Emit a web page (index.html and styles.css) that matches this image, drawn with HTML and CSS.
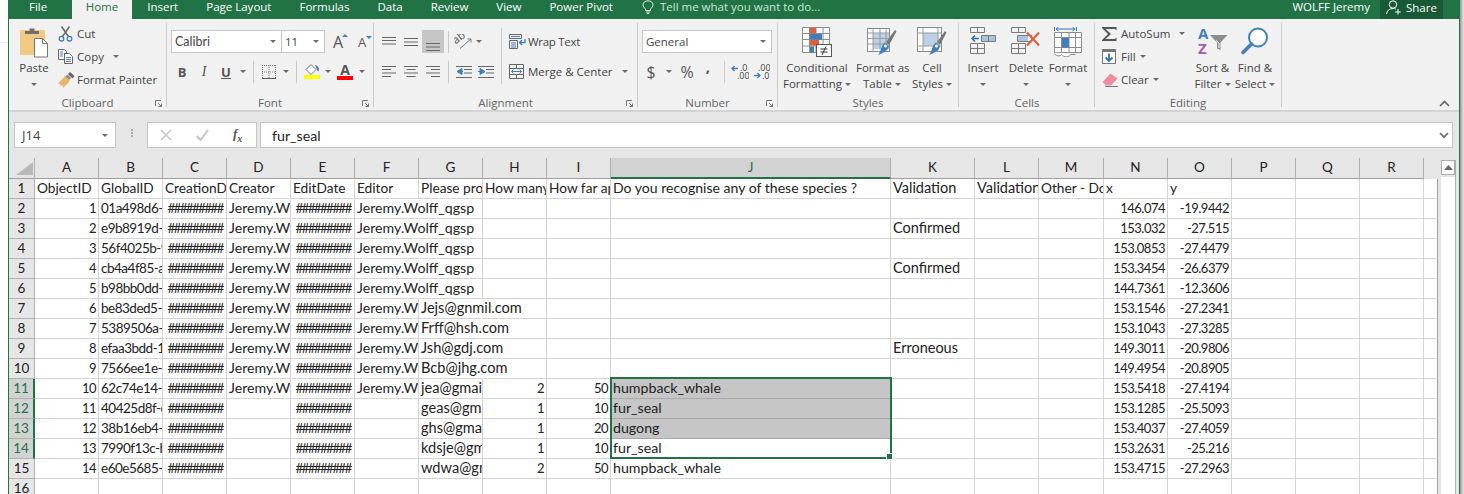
FILE: index.html
```html
<!doctype html>
<html>
<head>
  <meta charset="utf-8">
  <title>Excel</title>
  <link rel="stylesheet" href="styles.css">
</head>
<body>
<div class="page">
  <div class="gutter"></div>
  <div class="window">

    <!-- tabs -->
    <nav class="tabs">
      <span class="tab tab-file">File</span>
      <span class="tab tab-home">Home</span>
      <span class="tab">Insert</span>
      <span class="tab">Page Layout</span>
      <span class="tab">Formulas</span>
      <span class="tab">Data</span>
      <span class="tab">Review</span>
      <span class="tab">View</span>
      <span class="tab">Power Pivot</span>
      <span class="tell">
        <svg width="12" height="14" viewBox="0 0 12 14"><path d="M3.5 9C2 7.500 1 6.500 1 4.800 1 2.500 3.300 .8 6 .8s5 1.700 5 4c0 1.700-1 2.700-2.500 4.200v1.500h-5zM4 12h4M4.800 13.500h2.400" fill="none" stroke="#e4efe8" stroke-width="1"/></svg>
        Tell me what you want to do...
      </span>
      <span class="user">WOLFF Jeremy</span>
      <span class="share">
        <svg width="16" height="15" viewBox="0 0 16 15"><circle cx="7" cy="4.500" r="3.700" fill="none" stroke="#fff"/><path d="M.5 14c.5-3.500 3-5.500 6.500-5.500 1 0 2 .2 2.800.6M12 9v5.500M9.200 12h5.600" fill="none" stroke="#fff"/></svg>
        Share
      </span>
    </nav>

    <!-- ribbon -->
    <div class="ribbon">

      <section class="group g-clipboard">
        <div class="group-body">
          <div class="big w-paste">
            <div class="big-icon">
              <svg width="28" height="31" viewBox="0 0 28 31"><rect x="0" y="3" width="25" height="25" rx="1" fill="#f0c982"/><path d="M5 7V4h4.500V1.500h5V4H19v3z" fill="#6f6f6f"/><path d="M14.500 11.500h8l5 5v13.500h-13z" fill="#fff" stroke="#777"/><path d="M22.500 11.500v5h5" fill="none" stroke="#777"/></svg>
            </div>
            <div class="big-line">Paste</div>
            <div class="big-line"><i class="arrow"></i></div>
          </div>
          <div class="stack">
            <div class="row">
              <span class="sicon"><svg width="16" height="16" viewBox="0 0 16 16"><path d="M4.500 10.500 11.500 .5M10.500 10.500 3.500 .5" stroke="#6d6d6d" stroke-width="1.600" fill="none"/><circle cx="3.500" cy="12.700" r="2.300" fill="none" stroke="#3f7fbd" stroke-width="1.300"/><circle cx="11.500" cy="12.700" r="2.300" fill="none" stroke="#3f7fbd" stroke-width="1.300"/></svg></span>
              Cut
            </div>
            <div class="row">
              <span class="sicon"><svg width="15" height="15" viewBox="0 0 15 15"><path d="M.5.5h6l2 2v2h-2v6h-6z" fill="#fff" stroke="#666"/><path d="M6.500 4.500h5l3 3v7h-8z" fill="#fff" stroke="#666"/><path d="M8 8.500h5M8 10.500h5M8 12.500h5M2 3h3M2 5h3M2 7h3" stroke="#4f7fad"/></svg></span>
              Copy <i class="arrow copy-arrow"></i>
            </div>
            <div class="row">
              <span class="sicon"><svg width="17" height="16" viewBox="0 0 17 16"><path d="M7 4 12 9 7.500 13.500 5 16 4.500 13 2.500 14.500 2.500 12 0 11.500z" fill="#e9b56e"/><path d="M7.500 4.500 9.500 2.500 13 6 11 8z" fill="#8a8a8a"/><path d="M10 2 12 0l4.500 4-2 2.500z" fill="#666"/></svg></span>
              Format Painter
            </div>
          </div>
        </div>
        <div class="group-label">Clipboard</div>
        <svg class="launcher" width="7" height="7" viewBox="0 0 7 7"><path d="M.5 6V.5H6M3 3l3.500 3.500M6.500 3.500v3h-3" fill="none" stroke="#777"/></svg>
      </section>

      <section class="group g-font">
        <div class="group-body rows">
          <div class="trow">
            <div class="combo c-name">Calibri<i class="arrow"></i></div>
            <div class="combo c-size">11<i class="arrow"></i></div>
            <span class="fontstep grow">A<i class="caret"></i></span>
            <span class="fontstep shrink">A<i class="caret caret-down"></i></span>
          </div>
          <div class="trow">
            <span class="tb w22 fb">B</span>
            <span class="tb w22 fi">I</span>
            <span class="tb w22 fu">U</span>
            <span class="tb w12"><i class="arrow"></i></span>
            <span class="sep"></span>
            <span class="tb w22"><svg width="14" height="14" viewBox="0 0 14 14"><path d="M.5 0v13M7 0v13M13.500 0v13M0 .5h14M0 7h14" stroke="#777" stroke-dasharray="1 1" fill="none"/><path d="M0 13.500h14" stroke="#555"/></svg></span>
            <span class="tb w12"><i class="arrow"></i></span>
            <span class="sep"></span>
            <span class="tb w22"><svg width="16" height="17" viewBox="0 0 16 17"><path d="M2 6.500 7 1.500l5 5L7 11.500z" fill="#fff" stroke="#777"/><path d="M11 2c2 .5 4 2 4 4.500 0 1-.5 1.500-1 1.500s-1-.5-1-1.500z" fill="#3f7fbd"/><rect y="12" width="16" height="4" fill="#ffff00"/></svg></span>
            <span class="tb w10"><i class="arrow"></i></span>
            <span class="tb w24 fcolor">A</span>
            <span class="tb w10"><i class="arrow"></i></span>
          </div>
        </div>
        <div class="group-label">Font</div>
        <svg class="launcher" width="7" height="7" viewBox="0 0 7 7"><path d="M.5 6V.5H6M3 3l3.500 3.500M6.500 3.500v3h-3" fill="none" stroke="#777"/></svg>
      </section>

      <section class="group g-align">
        <div class="group-body">
          <div class="rows align-left">
            <div class="trow">
              <span class="tb w22"><svg width="14" height="10" viewBox="0 0 14 10"><path d="M0 .5h14M0 3.500h14M0 7h14" stroke="#666"/></svg></span>
              <span class="tb w22"><svg width="14" height="10" viewBox="0 0 14 10"><path d="M0 1.500h14M0 5h14M0 8.500h14" stroke="#666"/></svg></span>
              <span class="tb w22 tb-on"><svg width="14" height="10" viewBox="0 0 14 10" class="push"><path d="M0 2.500h14M0 6h14M0 9.500h14" stroke="#666"/></svg></span>
              <span class="sep"></span>
              <span class="tb w20"><svg width="18" height="15" viewBox="0 0 18 15"><text x="1" y="8" class="ab" transform="rotate(-38 5 8)">ab</text><path d="M6 14.500 17 5M17 5h-3.500M17 5v3.500" stroke="#777" fill="none"/></svg></span>
              <span class="tb w12"><i class="arrow"></i></span>
            </div>
            <div class="trow">
              <span class="tb w22"><svg width="14" height="11" viewBox="0 0 14 11"><path d="M0 .5h14M0 3.500h9M0 7h14M0 10.500h9" stroke="#666"/></svg></span>
              <span class="tb w22"><svg width="14" height="11" viewBox="0 0 14 11"><path d="M0 .5h14M2.500 3.500h9M0 7h14M2.500 10.500h9" stroke="#666"/></svg></span>
              <span class="tb w22"><svg width="14" height="11" viewBox="0 0 14 11"><path d="M0 .5h14M5 3.500h9M0 7h14M5 10.500h9" stroke="#666"/></svg></span>
              <span class="sep"></span>
              <span class="tb w22"><svg width="16" height="12" viewBox="0 0 16 12"><path d="M0 .5h16M8 3.500h8M8 7h8M0 11.500h16" stroke="#666"/><path d="M6 2.500 1 5.500l5 3zM5 5.500h2" fill="#3f7fbd" stroke="#3f7fbd"/></svg></span>
              <span class="tb w22"><svg width="16" height="12" viewBox="0 0 16 12"><path d="M0 .5h16M8 3.500h8M8 7h8M0 11.500h16" stroke="#666"/><path d="M2 2.500l5 3-5 3zM3 5.500H0" fill="#3f7fbd" stroke="#3f7fbd"/></svg></span>
            </div>
          </div>
          <span class="tall-sep"></span>
          <div class="rows align-right">
            <div class="trow">
              <span class="sicon"><svg width="17" height="15" viewBox="0 0 17 15"><path d="M.5.5h12v4H.5zM.5 6.500h8v8H.5z" fill="none" stroke="#666"/><path d="M2 2.500h9M2 9h5M2 11h5M2 13h5" stroke="#4f7fad"/><path d="M16 5v3.500h-5M13 6l-2.500 2.500L13 11" fill="none" stroke="#3f7fbd" stroke-width="1.300"/></svg></span>
              <span class="wrap-text">Wrap Text</span>
            </div>
            <div class="trow">
              <span class="sicon"><svg width="15" height="15" viewBox="0 0 15 15"><path d="M.5.5h14v14H.5zM.5 4.500h14M.5 10.500h14M7.500.5v4M7.500 10.500v4" fill="none" stroke="#666"/><path d="M2.500 7.500h10M4.500 5.500l-2 2 2 2M10.500 5.500l2 2-2 2" fill="none" stroke="#3f7fbd"/></svg></span>
              Merge &amp; Center <i class="arrow merge-arrow"></i>
            </div>
          </div>
        </div>
        <div class="group-label">Alignment</div>
        <svg class="launcher" width="7" height="7" viewBox="0 0 7 7"><path d="M.5 6V.5H6M3 3l3.500 3.500M6.500 3.500v3h-3" fill="none" stroke="#777"/></svg>
      </section>

      <section class="group g-number">
        <div class="group-body rows">
          <div class="trow">
            <div class="combo c-format">General<i class="arrow"></i></div>
          </div>
          <div class="trow">
            <span class="tb w18 fcur">$</span>
            <span class="tb w18"><i class="arrow"></i></span>
            <span class="tb w18 fcur">%</span>
            <span class="tb w24 fcomma">,</span>
            <span class="sep"></span>
            <span class="tb w22"><svg width="18" height="16" viewBox="0 0 18 16"><path d="M7 4.500H1M3.500 2 1 4.500 3.500 7" fill="none" stroke="#3f7fbd" stroke-width="1.300"/><text x="9" y="7" class="dec">.0</text><text x="6" y="15" class="dec">.00</text></svg></span>
            <span class="tb w20"><svg width="17" height="16" viewBox="0 0 17 16"><text x="5" y="7" class="dec">.00</text><text x="9" y="15" class="dec">.0</text><path d="M1 11.500h6M4.500 9 7 11.500 4.500 14" fill="none" stroke="#3f7fbd" stroke-width="1.300"/></svg></span>
          </div>
        </div>
        <div class="group-label">Number</div>
        <svg class="launcher" width="7" height="7" viewBox="0 0 7 7"><path d="M.5 6V.5H6M3 3l3.500 3.500M6.500 3.500v3h-3" fill="none" stroke="#777"/></svg>
      </section>

      <section class="group g-styles">
        <div class="group-body">
          <div class="big w-cf">
            <div class="big-icon">
              <svg width="30" height="30" viewBox="0 0 30 30"><path d="M.5.5h27v25H.5zM7.500.5v25M14 .5v25M21 .5v25M.5 6.500h27M.5 12.500h27M.5 19h27" fill="#fff" stroke="#8c8c8c"/><rect x="8" y="1" width="6" height="5.500" fill="#e0603c"/><rect x="8" y="7" width="12" height="5.500" fill="#3f7fbd"/><rect x="8" y="13" width="9" height="5.500" fill="#e0603c"/><rect x="8" y="19.500" width="4" height="6" fill="#3f7fbd"/><rect x="14.500" y="17.500" width="15" height="12" fill="#fff" stroke="#555"/><path d="M18.500 22h7M18.500 25h7M20 28l4-8.500" fill="none" stroke="#333"/></svg>
            </div>
            <div class="big-line">Conditional</div>
            <div class="big-line">Formatting <i class="arrow"></i></div>
          </div>
          <div class="big w-fat">
            <div class="big-icon">
              <svg width="30" height="30" viewBox="0 0 30 30"><rect x=".5" y="1.500" width="22" height="23" fill="#fff" stroke="#8c8c8c"/><rect x="6" y="6" width="16" height="16" fill="#bcd0e6"/><path d="M.5 6h22M6 1.500v23M13 1.500v21M19 1.500v21M.5 11.500h22M.5 17h22" stroke="#9a9a9a" fill="none"/><path d="M19 15 28 3l1.500 1.500L22 18z" fill="#777"/><path d="M18 15.500 22 19c-1 5-6 7-11 9 3-3 3-10 7-12.500z" fill="#3f7fbd"/><circle cx="18.500" cy="19" r="1.500" fill="#fff"/></svg>
            </div>
            <div class="big-line">Format as</div>
            <div class="big-line">Table <i class="arrow"></i></div>
          </div>
          <div class="big w-cs">
            <div class="big-icon">
              <svg width="30" height="30" viewBox="0 0 30 30"><rect x=".5" y=".5" width="24" height="24" fill="#fff" stroke="#8c8c8c"/><rect x="6" y="6" width="15" height="13" fill="#bcd0e6"/><path d="M.5 6h24M6 .5v24M.5 19h24M21 .5v24" stroke="#9a9a9a" fill="none"/><path d="M20 15 28 4l1.500 1.500L23 18z" fill="#777"/><path d="M19 15.500 23 19c-1 5-6 7-11 9 3-3 3-10 7-12.500z" fill="#3f7fbd"/><circle cx="19.500" cy="19" r="1.500" fill="#fff"/></svg>
            </div>
            <div class="big-line">Cell</div>
            <div class="big-line">Styles <i class="arrow"></i></div>
          </div>
        </div>
        <div class="group-label">Styles</div>
      </section>

      <section class="group g-cells">
        <div class="group-body">
          <div class="big w-ins">
            <div class="big-icon">
              <svg width="27" height="27" viewBox="0 0 27 27"><path d="M.5.500h14v5H.5zM7.500.5v5M.5 16.500h14v10H.5zM.5 21.500h14M7.500 16.500v10M11.500 8.500h14v6h-14zM18.500 8.500v6" fill="none" stroke="#7a7a7a"/><rect x="12" y="9" width="6" height="5" fill="#a9c4e0"/><rect x="19" y="9" width="6" height="5" fill="#a9c4e0"/><path d="M9 11.500H2M5 8.500l-3 3 3 3" fill="none" stroke="#2f75b5" stroke-width="1.600"/></svg>
            </div>
            <div class="big-line">Insert</div>
            <div class="big-line"><i class="arrow"></i></div>
          </div>
          <div class="big w-del">
            <div class="big-icon">
              <svg width="30" height="27" viewBox="0 0 30 27"><path d="M.5.500h14v5H.5zM7.500.5v5M.5 16.500h14v10H.5zM.5 21.500h14M7.500 16.500v10M6.500 8.500h14v6h-14z" fill="none" stroke="#7a7a7a"/><rect x="7" y="9" width="10" height="5" fill="#a9c4e0"/><path d="M16 5.500 28 18.500M28 5.500 16 18.500" stroke="#e0603c" stroke-width="2.200"/></svg>
            </div>
            <div class="big-line">Delete</div>
            <div class="big-line"><i class="arrow"></i></div>
          </div>
          <div class="big w-fmt">
            <div class="big-icon">
              <svg width="29" height="30" viewBox="0 0 29 30"><path d="M.5 0v4M22.500 0v4M2 2h19M4.500 0 2 2l2.500 2M18.500 0 21 2l-2.500 2" fill="none" stroke="#2f75b5"/><path d="M.5 5.500h27v20H.5zM7.500 5.500v20M15 5.500v20M21.500 5.500v20M.5 10.500h27M.5 20.500h27" fill="#fff" stroke="#8c8c8c"/><rect x="8" y="11" width="7" height="9.500" fill="#3f7fbd"/><path d="M.5 25.500c0 4 6 4 7 2 2 3 8 3 9 0h5" fill="#fff" stroke="#8c8c8c"/></svg>
            </div>
            <div class="big-line">Format</div>
            <div class="big-line"><i class="arrow"></i></div>
          </div>
        </div>
        <div class="group-label">Cells</div>
      </section>

      <section class="group g-edit">
        <div class="group-body">
          <div class="stack w-edit">
            <div class="row">
              <span class="sicon"><svg width="15" height="14" viewBox="0 0 15 14"><path d="M0 0h14.500v3.500L13 2H3.500L9 7l-5.500 5H13l1.500-1.500V14H0v-1l6-6-6-6z" fill="#555"/></svg></span>
              AutoSum <i class="arrow sum-arrow"></i>
            </div>
            <div class="row">
              <span class="sicon"><svg width="14" height="15" viewBox="0 0 14 15"><rect x=".5" y=".5" width="13" height="14" fill="#fff" stroke="#777"/><rect x="0" y="0" width="14" height="3" fill="#777"/><path d="M7 4.500v7M3.500 8.500 7 12l3.500-3.500" fill="none" stroke="#2f75b5" stroke-width="1.800"/></svg></span>
              Fill <i class="arrow"></i>
            </div>
            <div class="row">
              <span class="sicon"><svg width="16" height="14" viewBox="0 0 16 14"><path d="M.5 9 8.500.5l7 5L9 12.500H4z" fill="#ec8f9c"/><path d="M3 13.500h13" stroke="#777"/></svg></span>
              Clear <i class="arrow"></i>
            </div>
          </div>
          <div class="big w-sort">
            <div class="big-icon">
              <svg width="30" height="27" viewBox="0 0 30 27"><text x="0" y="12" class="az az-a">A</text><text x="0" y="27" class="az az-z">Z</text><path d="M12 8h17.500l-7 7.500V23l-3.500-1.500v-6z" fill="#8c8c8c"/><path d="M18 13.500 21 16v5" stroke="#fff" fill="none"/></svg>
            </div>
            <div class="big-line">Sort &amp;</div>
            <div class="big-line">Filter <i class="arrow"></i></div>
          </div>
          <div class="big w-find">
            <div class="big-icon">
              <svg width="28" height="28" viewBox="0 0 28 28"><circle cx="17" cy="10.500" r="9" fill="#fff" stroke="#3f7fbd" stroke-width="2"/><path d="M10.500 17 2 25.500" stroke="#3f7fbd" stroke-width="3.500" stroke-linecap="round"/></svg>
            </div>
            <div class="big-line">Find &amp;</div>
            <div class="big-line">Select <i class="arrow"></i></div>
          </div>
        </div>
        <div class="group-label">Editing</div>
      </section>

      <div class="ribbon-end">
        <svg width="11" height="7" viewBox="0 0 11 7"><path d="M1 6l4.500-4.500L10 6" fill="none" stroke="#666" stroke-width="1.700"/></svg>
      </div>
    </div>

    <!-- name box + formula -->
    <div class="formula">
      <div class="namebox">J14<i class="arrow"></i></div>
      <div class="dots"></div>
      <div class="fxbox">
        <svg width="12" height="12" viewBox="0 0 12 12"><path d="M1 1l10 10M11 1 1 11" stroke="#c4c4c4" stroke-width="1.500"/></svg>
        <svg width="13" height="12" viewBox="0 0 13 12"><path d="M1 7l3.500 4L12 1" fill="none" stroke="#c4c4c4" stroke-width="2"/></svg>
        <span class="fx">f<sub>x</sub></span>
      </div>
      <div class="fbar">fur_seal
        <svg width="10" height="7" viewBox="0 0 10 7"><path d="M1 1l4 4 4-4" fill="none" stroke="#666" stroke-width="1.700"/></svg>
      </div>
    </div>

    <!-- sheet -->
    <div class="sheet">
      <div class="grid-wrap">
        <table class="grid">
          <colgroup>
            <col class="c-row"><col class="c64"><col class="c64"><col class="c64"><col class="c64"><col class="c64"><col class="c64"><col class="c64"><col class="c64"><col class="c64"><col class="c-j"><col class="c-k"><col class="c64"><col class="c-m"><col class="c64"><col class="c64"><col class="c64"><col class="c64"><col class="c64"><col class="c-end">
          </colgroup>
          <tr class="heads">
            <th class="corner"><svg width="17" height="13" viewBox="0 0 17 13"><path d="M17 0v13H0z" fill="#b8b8b8"/></svg></th>
            <th>A</th><th>B</th><th>C</th><th>D</th><th>E</th><th>F</th><th>G</th><th>H</th><th>I</th><th class="on">J</th><th>K</th><th>L</th><th>M</th><th>N</th><th>O</th><th>P</th><th>Q</th><th>R</th><th class="head-end"></th>
          </tr>
          <tr class="titles"><th>1</th><td>ObjectID</td><td>GlobalID</td><td>CreationDate</td><td>Creator</td><td>EditDate</td><td>Editor</td><td>Please provide</td><td>How many animals</td><td>How far apart</td><td class="species">Do you recognise any of these species ?</td><td class="valid">Validation</td><td class="valid">Validation comment</td><td>Other - Do you</td><td>x</td><td>y</td><td></td><td></td><td></td><td></td></tr>
          <tr><th>2</th><td class="num">1</td><td class="guid">01a498d6-4c1e</td><td class="hash">#########</td><td>Jeremy.Wolff</td><td class="hash">#########</td><td class="spill">Jeremy.Wolff_qgsp</td><td></td><td></td><td></td><td></td><td></td><td></td><td></td><td class="num">146.074</td><td class="num">-19.9442</td><td></td><td></td><td></td><td></td></tr>
          <tr><th>3</th><td class="num">2</td><td class="guid">e9b8919d-7a02</td><td class="hash">#########</td><td>Jeremy.Wolff</td><td class="hash">#########</td><td class="spill">Jeremy.Wolff_qgsp</td><td></td><td></td><td></td><td></td><td class="valid">Confirmed</td><td></td><td></td><td class="num">153.032</td><td class="num">-27.515</td><td></td><td></td><td></td><td></td></tr>
          <tr><th>4</th><td class="num">3</td><td class="guid">56f4025b-90ad</td><td class="hash">#########</td><td>Jeremy.Wolff</td><td class="hash">#########</td><td class="spill">Jeremy.Wolff_qgsp</td><td></td><td></td><td></td><td></td><td></td><td></td><td></td><td class="num">153.0853</td><td class="num">-27.4479</td><td></td><td></td><td></td><td></td></tr>
          <tr><th>5</th><td class="num">4</td><td class="guid">cb4a4f85-a31f</td><td class="hash">#########</td><td>Jeremy.Wolff</td><td class="hash">#########</td><td class="spill">Jeremy.Wolff_qgsp</td><td></td><td></td><td></td><td></td><td class="valid">Confirmed</td><td></td><td></td><td class="num">153.3454</td><td class="num">-26.6379</td><td></td><td></td><td></td><td></td></tr>
          <tr><th>6</th><td class="num">5</td><td class="guid">b98bb0dd-22e4</td><td class="hash">#########</td><td>Jeremy.Wolff</td><td class="hash">#########</td><td class="spill">Jeremy.Wolff_qgsp</td><td></td><td></td><td></td><td></td><td></td><td></td><td></td><td class="num">144.7361</td><td class="num">-12.3606</td><td></td><td></td><td></td><td></td></tr>
          <tr><th>7</th><td class="num">6</td><td class="guid">be83ded5-61b7</td><td class="hash">#########</td><td>Jeremy.Wolff</td><td class="hash">#########</td><td>Jeremy.Wolff_qgsp</td><td class="spill mail">Jejs@gnmil.com</td><td></td><td></td><td></td><td></td><td></td><td></td><td class="num">153.1546</td><td class="num">-27.2341</td><td></td><td></td><td></td><td></td></tr>
          <tr><th>8</th><td class="num">7</td><td class="guid">5389506a-0d3c</td><td class="hash">#########</td><td>Jeremy.Wolff</td><td class="hash">#########</td><td>Jeremy.Wolff_qgsp</td><td class="spill mail">Frff@hsh.com</td><td></td><td></td><td></td><td></td><td></td><td></td><td class="num">153.1043</td><td class="num">-27.3285</td><td></td><td></td><td></td><td></td></tr>
          <tr><th>9</th><td class="num">8</td><td class="guid">efaa3bdd-18c9</td><td class="hash">#########</td><td>Jeremy.Wolff</td><td class="hash">#########</td><td>Jeremy.Wolff_qgsp</td><td class="spill mail">Jsh@gdj.com</td><td></td><td></td><td></td><td class="valid">Erroneous</td><td></td><td></td><td class="num">149.3011</td><td class="num">-20.9806</td><td></td><td></td><td></td><td></td></tr>
          <tr><th>10</th><td class="num">9</td><td class="guid">7566ee1e-f5a0</td><td class="hash">#########</td><td>Jeremy.Wolff</td><td class="hash">#########</td><td>Jeremy.Wolff_qgsp</td><td class="spill mail">Bcb@jhg.com</td><td></td><td></td><td></td><td></td><td></td><td></td><td class="num">149.4954</td><td class="num">-20.8905</td><td></td><td></td><td></td><td></td></tr>
          <tr><th class="on">11</th><td class="num">10</td><td class="guid">62c74e14-b7d2</td><td class="hash">#########</td><td>Jeremy.Wolff</td><td class="hash">#########</td><td>Jeremy.Wolff_qgsp</td><td class="mail">jea@gmail.com</td><td class="num">2</td><td class="num">50</td><td class="sel">humpback_whale</td><td></td><td></td><td></td><td class="num">153.5418</td><td class="num">-27.4194</td><td></td><td></td><td></td><td></td></tr>
          <tr><th class="on">12</th><td class="num">11</td><td class="guid">40425d8f-c416</td><td class="hash">#########</td><td></td><td class="hash">#########</td><td></td><td class="mail">geas@gmail.com</td><td class="num">1</td><td class="num">10</td><td class="sel">fur_seal</td><td></td><td></td><td></td><td class="num">153.1285</td><td class="num">-25.5093</td><td></td><td></td><td></td><td></td></tr>
          <tr><th class="on">13</th><td class="num">12</td><td class="guid">38b16eb4-e08a</td><td class="hash">#########</td><td></td><td class="hash">#########</td><td></td><td class="mail">ghs@gmail.com</td><td class="num">1</td><td class="num">20</td><td class="sel">dugong</td><td></td><td></td><td></td><td class="num">153.4037</td><td class="num">-27.4059</td><td></td><td></td><td></td><td></td></tr>
          <tr><th class="on">14</th><td class="num">13</td><td class="guid">7990f13c-b2f5</td><td class="hash">#########</td><td></td><td class="hash">#########</td><td></td><td class="mail">kdsje@gmail.com</td><td class="num">1</td><td class="num">10</td><td>fur_seal</td><td></td><td></td><td></td><td class="num">153.2631</td><td class="num">-25.216</td><td></td><td></td><td></td><td></td></tr>
          <tr><th>15</th><td class="num">14</td><td class="guid">e60e5685-97bc</td><td class="hash">#########</td><td></td><td class="hash">#########</td><td></td><td class="mail">wdwa@gmail.com</td><td class="num">2</td><td class="num">50</td><td>humpback_whale</td><td></td><td></td><td></td><td class="num">153.4715</td><td class="num">-27.2963</td><td></td><td></td><td></td><td></td></tr>
          <tr><th>16</th><td></td><td></td><td></td><td></td><td></td><td></td><td></td><td></td><td></td><td></td><td></td><td></td><td></td><td></td><td></td><td></td><td></td><td></td><td></td></tr>
        </table>
        <div class="selection"><i class="handle"></i></div>
      </div>
      <div class="vscroll">
        <div class="vscroll-track">
          <div class="vscroll-up"><svg width="9" height="5" viewBox="0 0 9 5"><path d="M0 5 4.500 0 9 5z" fill="#666"/></svg></div>
        </div>
      </div>
    </div>
  </div>
  <div class="shade"></div>
</div>
</body>
</html>
```

FILE: styles.css
```css
html, body {
  height: 100%;
  margin: 0;
  overflow: hidden;
  background: #fff;
}
.page {
  display: flex;
  height: 494px;
  width: 1464px;
  overflow: hidden;
}
.gutter {
  width: 8px;
  height: 42px;
  border-bottom: 1px solid #eee;
  flex: none;
}
.window {
  width: 1450px;
  flex: none;
  border-left: 1px solid #217346;
  border-right: 1px solid #217346;
  background: #e6e6e6;
  overflow: hidden;
  font-family: "Open Sans", sans-serif;
  font-size: 11.5px;
  color: #444;
}
.shade {
  width: 4px;
  flex: none;
  background: linear-gradient(to right, #9a9a9a, #e8e8e8);
}

/* tabs */
.tabs {
  display: flex;
  align-items: flex-start;
  height: 19px;
  background: #217346;
  color: #fff;
  font-size: 11.5px;
  line-height: 14px;
}
.tab {
  padding: 0 14px 5px;
  white-space: nowrap;
}
.tab-file {
  padding: 0 25px 5px 20px;
}
.tab-home {
  background: #f1f1f1;
  color: #217346;
  padding: 0 13.5px 5px;
  margin-right: 1.5px;
}
.tell {
  display: flex;
  align-items: center;
  gap: 6px;
  margin-left: 15px;
  color: #cfe3d7;
}
.user {
  margin-left: auto;
  white-space: nowrap;
}
.share {
  display: flex;
  align-items: center;
  gap: 4px;
  height: 19px;
  width: 63px;
  margin: 0 16px 0 10px;
  padding: 0 0 4px 6px;
  box-sizing: border-box;
  background: #195a36;
}

/* ribbon */
.ribbon {
  display: flex;
  height: 93px;
  box-sizing: border-box;
  padding-top: 4px;
  background: #f1f1f1;
  border-bottom: 2px solid #d4d4d4;
}
.group {
  position: relative;
  box-sizing: border-box;
  height: 84px;
  flex: none;
  border-right: 1px solid #c8c8c8;
  display: flex;
  flex-direction: column;
}
.g-clipboard { width: 158px; padding-left: 4px; }
.g-font { width: 207px; padding-left: 4px; }
.g-align { width: 264px; padding-left: 4px; }
.g-number { width: 140px; padding-left: 4px; }
.g-styles { width: 181px; }
.g-cells { width: 136px; padding-left: 1px; }
.g-edit { width: 187px; padding-left: 7px; }
.group-body {
  display: flex;
  box-sizing: border-box;
  height: 73px;
  flex: none;
}
.group-label {
  height: 11px;
  line-height: 14px;
  margin-left: -4px;
  text-align: center;
  color: #666;
}
.g-styles .group-label, .g-cells .group-label { margin-left: 0; }
.g-edit .group-label { margin-left: -7px; }
.launcher {
  position: absolute;
  right: 4px;
  bottom: 0;
}
.arrow {
  display: inline-block;
  width: 0;
  height: 0;
  border-left: 3px solid transparent;
  border-right: 3px solid transparent;
  border-top: 3px solid #6b6b6b;
  vertical-align: middle;
}

/* big buttons */
.big {
  flex: none;
  padding-top: 4px;
  text-align: center;
  white-space: nowrap;
}
.big-icon {
  height: 33px;
  display: flex;
  justify-content: center;
}
.big-line {
  height: 16px;
  line-height: 16px;
}
.w-paste { width: 42px; margin-right: 3px; }
.w-cf { width: 78px; }
.w-fat { width: 52px; }
.w-cs { width: 48px; }
.w-ins { width: 46px; }
.w-del { width: 40px; }
.w-fmt { width: 44px; }
.w-sort { width: 41px; }
.w-find { width: 44px; }
.w-edit { width: 90px; }

/* three stacked small buttons */
.stack {
  flex: none;
  margin-top: -1px;
}
.row {
  display: flex;
  align-items: center;
  height: 23px;
  white-space: nowrap;
}
.sicon {
  width: 19px;
  flex: none;
  display: flex;
  align-items: center;
}
.row .arrow {
  margin-left: 4px;
}
.row .copy-arrow { margin-left: 9px; }
.row .sum-arrow { margin-left: 9px; }

/* two toolbar rows */
.rows {
  display: flex;
  flex-direction: column;
  box-sizing: border-box;
  padding-top: 7px;
  gap: 7px;
  flex: none;
}
.trow {
  display: flex;
  align-items: center;
  height: 23px;
  white-space: nowrap;
}
.tb {
  display: flex;
  align-items: center;
  justify-content: center;
  height: 23px;
  flex: none;
}
.w10 { width: 10px; }
.w12 { width: 12px; }
.w18 { width: 18px; }
.w20 { width: 20px; }
.w22 { width: 22px; }
.w24 { width: 24px; }
.tb-on { background: #c6c6c6; }
.push { margin-top: 8px; }
.sep {
  width: 1px;
  height: 22px;
  margin: 0 4px;
  background: #c8c8c8;
  flex: none;
}
.tall-sep {
  width: 1px;
  height: 56px;
  margin-top: 5px;
  background: #c8c8c8;
  flex: none;
}
.align-left { width: 123px; }
.align-right { padding-left: 7px; }
.wrap-text { letter-spacing: -.3px; }
.merge-arrow { margin-left: 9px; }
.ab {
  font: 11px "Open Sans", sans-serif;
  fill: #555;
}
.dec {
  font: 9px "Open Sans", sans-serif;
  fill: #444;
}
.az {
  font: bold 15px "Open Sans", sans-serif;
}
.az-a { fill: #3f7fbd; }
.az-z { fill: #9b5fb5; }

/* combos */
.combo {
  display: flex;
  align-items: center;
  justify-content: space-between;
  box-sizing: border-box;
  height: 23px;
  padding: 0 5px 0 3px;
  background: #fff;
  border: 1px solid #c6c6c6;
  flex: none;
}
.c-name { width: 111px; font-family: "Lato", sans-serif; font-size: 12.5px; }
.c-size { width: 44px; margin-left: -1px; }
.c-format { width: 130px; }
.fontstep {
  position: relative;
  font-size: 16px;
  color: #555;
  width: 14px;
  text-align: center;
}
.grow { margin-left: 6px; }
.shrink { margin-left: 10px; font-size: 13px; }
.caret {
  position: absolute;
  right: -3px;
  top: 3px;
  border-left: 3px solid transparent;
  border-right: 3px solid transparent;
  border-bottom: 3px solid #3f7fbd;
}
.caret-down {
  border-bottom: 0;
  border-top: 3px solid #3f7fbd;
}
.fb { font: bold 13px "Open Sans", sans-serif; color: #555; }
.fi { font: italic 14px "Liberation Serif", serif; color: #555; }
.fu { font: bold 13px "Open Sans", sans-serif; color: #555; text-decoration: underline; }
.fcolor {
  box-sizing: border-box;
  height: 16px;
  width: 16px;
  margin: 0 4px;
  font: bold 14px/12px "Open Sans", sans-serif;
  color: #555;
  align-items: flex-start;
  border-bottom: 4px solid #f00;
}
.fcur { font-size: 16px; color: #555; }
.fcomma { font-weight: bold; font-size: 15px; margin-top: -12px; color: #555; }

.ribbon-end {
  flex: 1;
  display: flex;
  justify-content: flex-end;
  align-items: flex-end;
  height: 84px;
  padding: 0 9px 0 0;
  box-sizing: border-box;
}

/* formula row */
.formula {
  display: flex;
  height: 46px;
  box-sizing: border-box;
  padding: 10px 6px 10px 5px;
  align-items: stretch;
}
.namebox {
  display: flex;
  align-items: center;
  justify-content: space-between;
  box-sizing: border-box;
  width: 102px;
  padding: 0 7px;
  background: #fff;
  border: 1px solid #c6c6c6;
  font: 13px "Open Sans", sans-serif;
}
.dots {
  width: 2px;
  height: 8px;
  margin: 7px 14px 0 15px;
  background: repeating-linear-gradient(#aaa 0 2px, transparent 2px 3px);
}
.fxbox {
  display: flex;
  align-items: center;
  box-sizing: border-box;
  width: 110px;
  padding-left: 12px;
  gap: 24px;
  background: #fff;
  border: 1px solid #c6c6c6;
}
.fx {
  font: italic bold 13px "Liberation Serif", serif;
  color: #555;
}
.fx sub { font-size: 10px; }
.fbar {
  flex: 1;
  display: flex;
  align-items: center;
  justify-content: space-between;
  box-sizing: border-box;
  margin-left: 3px;
  padding: 0 3px 0 11px;
  background: #fff;
  border: 1px solid #c6c6c6;
  font: 14.2px "Lato", sans-serif;
  color: #222;
}

/* sheet */
.sheet {
  display: flex;
  height: 336px;
}
.grid-wrap {
  position: relative;
  width: 1429px;
  flex: none;
}
.grid {
  border-collapse: separate;
  border-spacing: 0;
  table-layout: fixed;
  width: 1429px;
  background: #fff;
  font: 14.2px "Lato", sans-serif;
  color: #222;
  border-right: 0;
}
.c-row { width: 26px; }
.c64 { width: 64px; }
.c-j { width: 280px; }
.c-k { width: 84px; }
.c-m { width: 65px; }
.c-end { width: 14px; }
.grid td, .grid th {
  box-sizing: border-box;
  height: 20px;
  padding: 0 1px 0 2px;
  line-height: 18px;
  vertical-align: top;
  white-space: nowrap;
  overflow: hidden;
  font-weight: normal;
  border-right: 1px solid #d4d4d4;
  border-bottom: 1px solid #d4d4d4;
}
.grid td:last-child {
  border-right: 1px solid #9f9f9f;
}
.grid th {
  padding: 0;
  font-size: 13.5px;
  line-height: 19px;
  text-align: center;
  background: #e6e6e6;
  border-right: 1px solid #b0b0b0;
  border-bottom: 1px solid #b0b0b0;
}
.grid .heads th {
  border-bottom: 1px solid #9f9f9f;
}
.grid .heads .head-end {
  border-right: 0;
  border-bottom: 0;
}
.corner svg {
  display: block;
  margin: 4px 0 0 7px;
}
.grid th.on {
  background: #d2d2d2;
  color: #217346;
  border-right: 2px solid #217346;
}
.grid .heads th.on {
  border-right: 1px solid #b0b0b0;
  border-bottom: 2px solid #217346;
}
.titles td { font-size: 13.7px; }
.grid .species { font-size: 14.05px; }
.grid .valid { font-size: 14.5px; }
.grid td.mail { font-size: 14.6px; }
.grid td.num {
  font-size: 13px;
  line-height: 19px;
  letter-spacing: -.5px;
  text-align: right;
  padding-right: 2px;
}
.grid td.guid {
  font-size: 13.5px;
  line-height: 19px;
  letter-spacing: -.5px;
}
.grid td.hash {
  font-size: 13.5px;
  line-height: 19px;
  text-align: center;
  letter-spacing: -1.7px;
}
.grid td.spill {
  overflow: visible;
  border-right-color: transparent;
}
.grid td.sel {
  background: #c6c6c6;
  border-bottom-color: #a8a8a8;
}
.selection {
  position: absolute;
  left: 601px;
  top: 219px;
  box-sizing: border-box;
  width: 282px;
  height: 82px;
  border: 2px solid #217346;
}
.handle {
  position: absolute;
  right: -2px;
  bottom: -2px;
  width: 5px;
  height: 5px;
  background: #217346;
  outline: 1px solid #fff;
}
.vscroll {
  flex: 1;
  box-sizing: border-box;
  padding: 0 3px;
}
.vscroll-track {
  height: 100%;
  box-sizing: border-box;
  background: linear-gradient(#e6e6e6 0 17px, #fff 17px);
  border-right: 1px solid #b0b0b0;
}
.vscroll-up {
  display: flex;
  align-items: center;
  justify-content: center;
  box-sizing: border-box;
  height: 15px;
  margin-top: 2px;
  background: #fff;
  border: 1px solid #ababab;
}
```
